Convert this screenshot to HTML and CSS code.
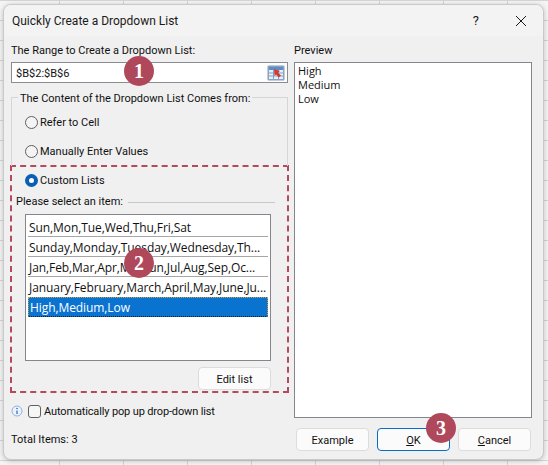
FILE: index.html
```html
<!DOCTYPE html>
<html lang="en">
<head>
<meta charset="utf-8">
<title>Quickly Create a Dropdown List</title>
<link rel="stylesheet" href="styles.css">
</head>
<body>
<div class="sheet">
  <div class="dialog">
    <header class="titlebar">
      <span class="title">Quickly Create a Dropdown List</span>
      <span class="help">?</span>
      <svg class="close" width="12" height="12" viewBox="0 0 12 12"><path d="M1 1l10 10M11 1L1 11" stroke="#1a1a1a" stroke-width="1" fill="none"/></svg>
    </header>
    <div class="content">
      <div class="left">
        <div class="label range-label">The Range to Create a Dropdown List:</div>
        <div class="range">
          <span>$B$2:$B$6</span>
          <span class="picker">
            <svg width="16" height="14" viewBox="0 0 16 14">
              <rect x="0.5" y="0.5" width="15" height="13" fill="#e8f0fa" stroke="#8aa4c4"/>
              <rect x="1" y="1" width="14" height="3" fill="#5b8ccc"/>
              <path d="M1 7h14M1 10h14M5.500 4v9M10.500 4v9" stroke="#7f9fc8" stroke-width="1" fill="none"/>
              <path d="M6 3l6 2-2 1.500 3 3-2 2-3-3L6.500 10z" fill="#d8392c"/>
            </svg>
          </span>
        </div>
        <div class="source">
          <div class="legend">The Content of the Dropdown List Comes from:</div>
          <label class="option first"><span class="radio"></span>Refer to Cell</label>
          <label class="option second"><span class="radio"></span>Manually Enter Values</label>
        </div>
        <div class="dashed">
          <label class="option custom"><span class="radio on"></span>Custom Lists</label>
          <div class="select-head"><span>Please select an item:</span><i></i></div>
          <div class="listbox">
            <div class="row">Sun,Mon,Tue,Wed,Thu,Fri,Sat</div>
            <div class="row">Sunday,Monday,Tuesday,Wednesday,Th...</div>
            <div class="row">Jan,Feb,Mar,Apr,May,Jun,Jul,Aug,Sep,Oc...</div>
            <div class="row plain">January,February,March,April,May,June,Ju...</div>
            <div class="row selected">High,Medium,Low</div>
          </div>
          <div class="edit-wrap"><button class="btn edit">Edit list</button></div>
        </div>
        <div class="auto">
          <svg class="info" width="12" height="12" viewBox="0 0 12 12"><circle cx="6" cy="6" r="5" fill="#eef3fb" stroke="#8fb0e0"/><path d="M6 5.500v3.500" stroke="#2a66c0" stroke-width="1.200"/><circle cx="6" cy="3.500" r="0.800" fill="#2a66c0"/></svg>
          <span class="check"></span>
          <span class="auto-text">Automatically pop up drop-down list</span>
        </div>
        <div class="total">Total Items: 3</div>
      </div>
      <div class="right">
        <div class="label">Preview</div>
        <div class="preview">High<br>Medium<br>Low</div>
        <div class="actions">
          <button class="btn">Example</button>
          <button class="btn default"><u>O</u>K</button>
          <button class="btn"><u>C</u>ancel</button>
        </div>
      </div>
    </div>
    <span class="badge b1">1</span>
    <span class="badge b2">2</span>
    <span class="badge b3">3</span>
  </div>
</div>
</body>
</html>
```

FILE: styles.css
```css
* { box-sizing: border-box; }
html, body { margin: 0; height: 100%; }
body { width: 548px; height: 465px; overflow: hidden; font-family: Roboto, "Open Sans", sans-serif; font-size: 11px; color: #111; }
.sheet {
  width: 548px; height: 465px; padding: 4px 4px 5px 3px;
  background-color: #f4f4f4;
  background-image:
    linear-gradient(to right, #d4d4d4 1px, transparent 1px),
    linear-gradient(to bottom, #d4d4d4 1px, transparent 1px);
  background-size: 64px 20px;
  background-position: 59px 0;
}
.dialog {
  position: relative; width: 541px; height: 456px;
  background: #f0f0f0; border: 1px solid #c9c9c9; border-radius: 8px;
  box-shadow: 0 1px 5px rgba(0,0,0,.22);
  overflow: hidden;
}
.titlebar { display: flex; align-items: center; height: 31px; padding: 0 16px 0 8px; background: #f3f3f3; }
.title { flex: 1; font-size: 12px; color: #1a1a1a; }
.help { font-size: 13px; margin-right: 36px; color: #1a1a1a; }
.close { display: block; }
.content { display: flex; padding: 0 11px 0 7px; }
.left { width: 279px; margin-right: 4px; display: flex; flex-direction: column; }
.right { width: 238px; display: flex; flex-direction: column; }
.label { height: 14px; line-height: 14px; margin-top: 8px; margin-bottom: 4px; }
.range {
  display: flex; justify-content: space-between; align-items: center;
  width: 277px; height: 21px; padding: 1px 2px 0 4px;
  background: #fff; border: 1px solid #8b8b93; margin-left: 0;
}
.picker { display: flex; width: 18px; height: 16px; align-items: center; justify-content: center; background: #e8eef5; border: 1px solid #c4ccd6; border-radius: 2px; }
.source { position: relative; width: 277px; height: 69px; margin-top: 14px; border: 1px solid #d6d6d6; border-bottom: 0; }
.legend { position: absolute; left: 6px; top: -6px; padding: 0 2px; background: #f0f0f0; line-height: 14px; }
.option { display: flex; align-items: center; gap: 2px; height: 14px; line-height: 14px; }
.option.first { position: absolute; left: 13px; top: 18px; }
.option.second { position: absolute; left: 13px; top: 47px; }
.radio { width: 13px; height: 13px; margin-bottom: 2px; border: 1px solid #5f5f5f; border-radius: 50%; background: #f4f4f4; }
.radio.on { border: 4px solid #0a5fb4; background: #fff; }
.dashed {
  width: 279px; height: 228px; margin-top: -1px; margin-left: -1px;
  border: 2px dashed #b54a5e; padding: 7px 0 0 4px;
  display: flex; flex-direction: column;
}
.option.custom { margin-left: 9px; }
.select-head { display: flex; align-items: center; gap: 5px; height: 14px; margin-top: 7px; line-height: 14px; }
.select-head i { display: block; width: 147px; height: 1px; background: #c8c8c8; }
.listbox { width: 246px; height: 147px; margin: 5px 0 0 9px; padding: 2px 2px; background: #fff; border: 1px solid #85858e; }
.row { height: 20px; padding-left: 1px; line-height: 21px; white-space: nowrap; border-bottom: 1px solid #a6a6a6; font-family: "Open Sans", sans-serif; font-size: 12px; letter-spacing: -0.08px; }
.row.plain { border-bottom: 0; }
.row.selected { background: #0a73d0; color: #fff; border: 1px dotted #c9a23c; border-bottom-color: #123; padding-left: 1px; line-height: 19px; }
.edit-wrap { display: flex; justify-content: flex-end; margin: 6px 16px 0 0; }
.btn {
  width: 73px; height: 23px; padding: 1px 0 0; background: #fbfbfb;
  border: 1px solid #dcdcdc; border-radius: 4px;
  font: inherit; color: #111;
}
.btn.default { border-color: #0a6cc4; }
.auto { display: flex; align-items: center; height: 14px; margin-top: 11px; margin-left: 0; }
.auto-text { letter-spacing: -0.14px; }
.info { display: block; margin-right: 5px; }
.check { width: 13px; height: 13px; margin-right: 3px; border: 1px solid #5f5f5f; border-radius: 3px; background: #f6f6f6; }
.total { margin-top: 15px; height: 14px; line-height: 14px; }
.preview { width: 238px; height: 356px; padding: 1px 3px 0; background: #fff; border: 1px solid #85858e; font-family: "Open Sans", sans-serif; font-size: 11px; line-height: 14px; }
.actions { display: flex; gap: 8px; margin: 10px 0 0 2px; }
.badge {
  position: absolute; display: flex; align-items: center; justify-content: center;
  width: 30px; height: 30px; border-radius: 50%;
  background: #b0485c; color: #fff;
  font: bold 20px "Liberation Serif", serif;
}
.b1 { left: 120px; top: 51px; }
.b2 { left: 120px; top: 243px; }
.b3 { left: 422px; top: 408px; }
```
